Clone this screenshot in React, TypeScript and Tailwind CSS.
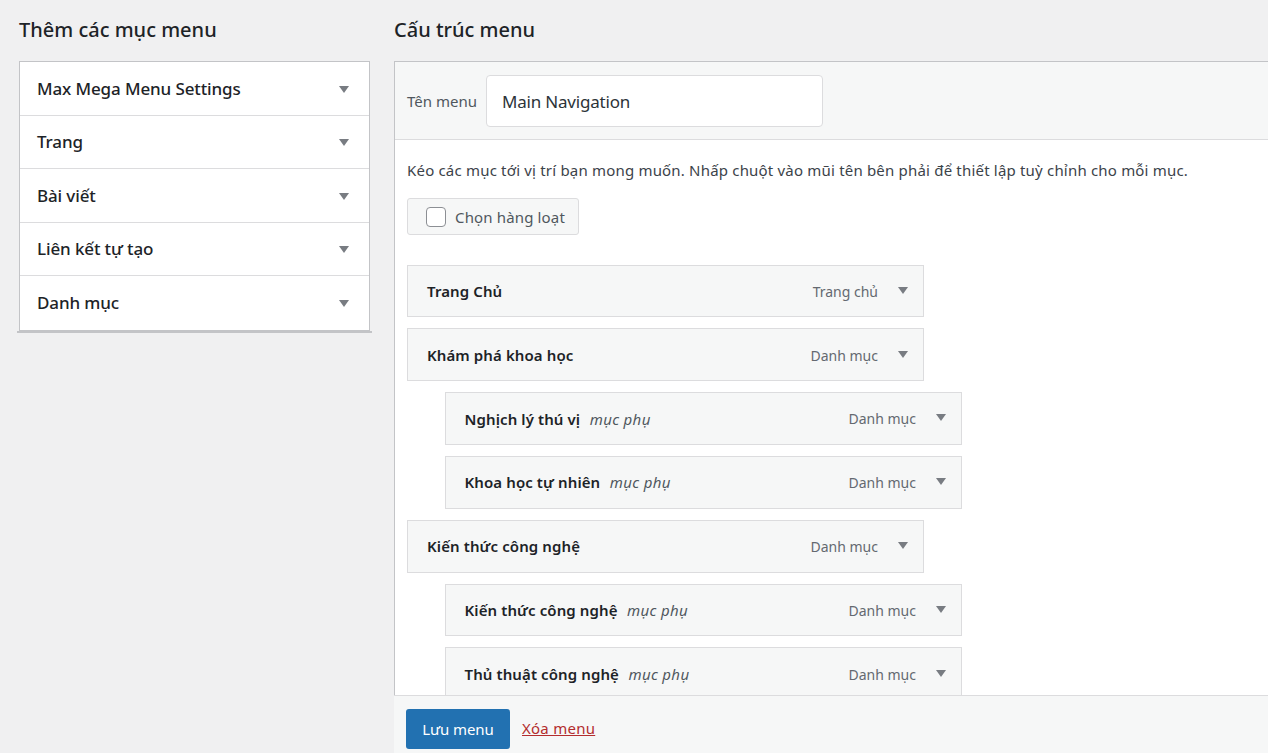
import React from "react";

const Caret = () => (
  <svg width="10" height="7" viewBox="0 0 10 7" className="shrink-0 block">
    <path d="M0 0H10L5 7Z" fill="#787c82" />
  </svg>
);

const left = ["Max Mega Menu Settings", "Trang", "Bài viết", "Liên kết tự tạo", "Danh mục"];

const items = [
  { t: "Trang Chủ", k: "Trang chủ", sub: false },
  { t: "Khám phá khoa học", k: "Danh mục", sub: false },
  { t: "Nghịch lý thú vị", k: "Danh mục", sub: true },
  { t: "Khoa học tự nhiên", k: "Danh mục", sub: true },
  { t: "Kiến thức công nghệ", k: "Danh mục", sub: false },
  { t: "Kiến thức công nghệ", k: "Danh mục", sub: true },
  { t: "Thủ thuật công nghệ", k: "Danh mục", sub: true },
];

export default function App() {
  return (
    <div
      className="h-[753px] w-[1268px] overflow-hidden bg-[#f0f0f1] flex text-[#1d2327]"
      style={{ fontFamily: '"Noto Sans", "Open Sans", sans-serif' }}
    >
      <div className="w-[394px] shrink-0 pl-[19px] pt-[16px]">
        <h2 className="text-[20px] leading-[28px] font-medium">Thêm các mục menu</h2>
        <div className="mt-[17px] w-[351px] border border-[#c3c4c7] bg-white">
          {left.map((l, i) => (
            <div
              key={l}
              className={`h-[53.5px] flex items-center justify-between pl-[17px] pr-[20px] ${i < 4 ? "border-b border-[#dcdcde]" : ""}`}
            >
              <span className="text-[17px] font-medium tracking-[-0.12px]">{l}</span>
              <span className="mt-[2px]"><Caret /></span>
            </div>
          ))}
        </div>
        <div className="-ml-[2px] w-[355px] h-[2px] bg-[#c3c4c7]" />
      </div>
      <div className="flex-1 min-w-0 pt-[16px] flex flex-col">
        <h2 className="text-[20px] leading-[28px] font-medium">Cấu trúc menu</h2>
        <div className="mt-[17px] flex-1 min-h-0 flex flex-col border-l border-t border-[#c3c4c7] bg-white">
          <div className="h-[78px] shrink-0 bg-[#f6f7f7] border-b border-[#dcdcde] flex items-center pl-[12px]">
            <span className="text-[15px] text-[#50575e] w-[79px] pt-[1px]">Tên menu</span>
            <div className="w-[337px] h-[52px] bg-white border border-[#dcdcde] rounded-[4px] flex items-center pl-[15px] pt-[2px] text-[17px] tracking-[-0.2px] text-[#2c3338]">
              Main Navigation
            </div>
          </div>
          <div className="flex-1 min-h-0 overflow-hidden pl-[12px] pt-[19px]">
            <p className="text-[15px] leading-[22px] text-[#3c434a] tracking-[0.19px] whitespace-nowrap">
              Kéo các mục tới vị trí bạn mong muốn. Nhấp chuột vào mũi tên bên phải để thiết lập tuỳ chỉnh cho mỗi mục.
            </p>
            <div className="mt-[17px] w-[172px] h-[37px] border border-[#dcdcde] rounded-[3px] bg-[#f6f7f7] flex items-center pl-[18px] gap-[9px]">
              <span className="w-[20px] h-[20px] rounded-[4px] border border-[#8c8f94] bg-white shrink-0" />
              <span className="text-[15px] text-[#50575e] tracking-[0.15px] pt-[1px]">Chọn hàng loạt</span>
            </div>
            <div className="mt-[29.6px] flex flex-col gap-[11px]">
              {items.map((it, i) => (
                <div
                  key={i}
                  className={`shrink-0 h-[52.8px] w-[517px] border border-[#dcdcde] bg-[#f6f7f7] flex items-center pr-[15px] pt-[0.5px] ${it.sub ? "ml-[38px] pl-[18.5px]" : "pl-[19px]"}`}
                >
                  <span className="text-[15px] font-semibold text-[#1d2327] tracking-[0.1px] whitespace-nowrap">{it.t}</span>
                  {it.sub && <span className="ml-[9.5px] text-[15px] italic text-[#50575e] tracking-[0.35px] whitespace-nowrap">mục phụ</span>}
                  <span className="ml-auto text-[14px] text-[#646970] whitespace-nowrap">{it.k}</span>
                  <span className="ml-[20px] -mt-[2px]"><Caret /></span>
                </div>
              ))}
            </div>
          </div>
          <div className="h-[58px] shrink-0 -ml-[1px] bg-[#f6f7f7] border-t border-[#dcdcde] flex items-center pl-[12px] pt-[8px]">
            <div className="w-[104px] h-[40px] pt-[1px] rounded-[3px] bg-[#2271b1] text-white text-[15px] flex items-center justify-center tracking-[-0.1px]">Lưu menu</div>
            <a className="ml-[12px] text-[15px] text-[#b32d2e] underline tracking-[0.25px]">Xóa menu</a>
          </div>
        </div>
      </div>
    </div>
  );
}
